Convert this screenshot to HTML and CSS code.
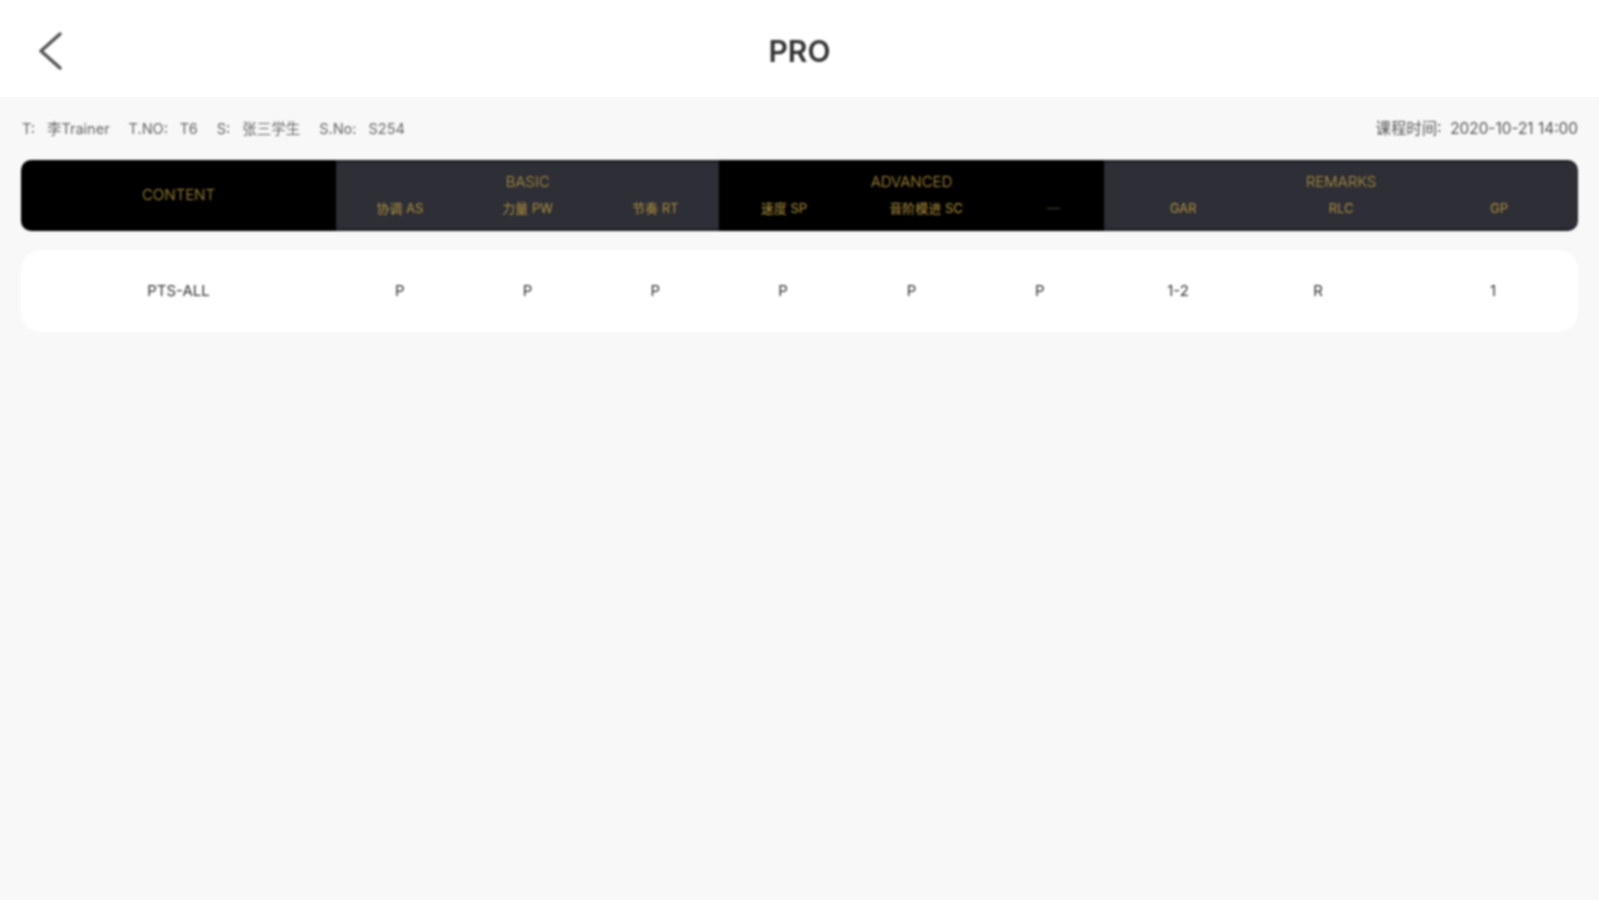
FILE: index.html
```html
<!DOCTYPE html>
<html lang="zh">
<head>
<meta charset="utf-8">
<title>PRO</title>
<link rel="stylesheet" href="styles.css">
</head>
<body>
<header class="topbar">
  <svg class="back" viewBox="0 0 24 38" width="24" height="38" fill="none"><path d="M22 2 L3 19 L22 36" stroke="#555" stroke-width="3.4" stroke-linecap="round" stroke-linejoin="round"/></svg>
  <h1 class="title">PRO</h1>
</header>
<main class="content">
  <div class="info">
    <div class="info-left">
      <div class="pair"><span>T:</span><span>李Trainer</span></div>
      <div class="pair"><span>T.NO:</span><span>T6</span></div>
      <div class="pair"><span>S:</span><span>张三学生</span></div>
      <div class="pair"><span>S.No:</span><span>S254</span></div>
    </div>
    <div class="info-right">课程时间:&nbsp; 2020-10-21 14:00</div>
  </div>
  <div class="table-head">
    <div class="group black col-content"><div class="solo">CONTENT</div></div>
    <div class="group slate col-basic">
      <div class="group-title">BASIC</div>
      <div class="subs"><span>协调 AS</span><span>力量 PW</span><span>节奏 RT</span></div>
    </div>
    <div class="group black col-advanced">
      <div class="group-title">ADVANCED</div>
      <div class="subs subs-advanced"><span>速度 SP</span><span>音阶模进 SC</span><span class="dim">—</span></div>
    </div>
    <div class="group slate col-remarks">
      <div class="group-title">REMARKS</div>
      <div class="subs"><span>GAR</span><span>RLC</span><span>GP</span></div>
    </div>
  </div>
  <div class="table-row">
    <div class="col-content">PTS-ALL</div>
    <div class="cells col-basic"><span>P</span><span>P</span><span>P</span></div>
    <div class="cells col-advanced"><span>P</span><span>P</span><span>P</span></div>
    <div class="cells-remarks col-remarks"><span>1-2</span><span>R</span><span class="last">1</span></div>
  </div>
</main>
</body>
</html>
```
FILE: styles.css
```css
* { box-sizing: border-box; }
html, body { margin: 0; height: 100%; }
body {
  width: 1599px;
  height: 900px;
  overflow: hidden;
  background: #f8f8f8;
  font-family: Inter, "Noto Sans CJK SC", sans-serif;
  color: #555;
}
.topbar {
  height: 97px;
  background: #fff;
  display: flex;
  align-items: center;
  justify-content: center;
  position: relative;
}
.back { position: absolute; left: 38px; top: 32px; filter: blur(0.9px); }
.title {
  margin: 4px 0 0;
  font-size: 30px;
  line-height: 40px;
  font-weight: 600;
  color: #333;
  filter: blur(0.9px);
}
.content { padding: 21px 21px 0; filter: blur(1px); }
.info {
  display: flex;
  justify-content: space-between;
  align-items: center;
  height: 22px;
  line-height: 22px;
  font-size: 14.5px;
  color: #666;
}
.info-left { display: flex; gap: 19px; padding-left: 1px; }
.pair { display: flex; gap: 12px; height: 22px; }
.info-right { font-size: 15.4px; color: #555; }
.table-head {
  margin-top: 20px;
  height: 71px;
  display: flex;
  border-radius: 10px;
  overflow: hidden;
}
.col-content { width: 315px; flex: none; }
.col-basic { width: 383px; flex: none; }
.col-advanced { width: 385px; flex: none; }
.col-remarks { flex: 1; min-width: 0; }
.black { background: #000; }
.slate { background: #2d2e36; box-shadow: inset 0 3px 2px -1px #1c1d22, inset 0 -3px 2px -1px #1c1d22; }
.group { color: #a98d3b; font-size: 15px; font-weight: 300; text-align: center; padding-top: 12px; }
.group-title { height: 20px; line-height: 20px; }
.solo { line-height: 45px; }
.subs { display: flex; margin-top: 6px; font-size: 13px; font-weight: 400; line-height: 20px; }
.subs span { flex: 1; }
.subs-advanced { display: grid; grid-template-columns: 130px 154px 1fr; }
.dim { color: #4a4a3a; }
.table-row {
  margin-top: 19px;
  height: 82px;
  background: #fff;
  border-radius: 20px;
  display: flex;
  align-items: center;
  padding-bottom: 2px;
  font-size: 15px;
  font-weight: 400;
  color: #333;
  text-align: center;
}
.cells { display: flex; }
.cells span { flex: 1; }
.cells-remarks { display: grid; grid-template-columns: 148px 132px 1fr; }
.last { padding-left: 24px; }
```
